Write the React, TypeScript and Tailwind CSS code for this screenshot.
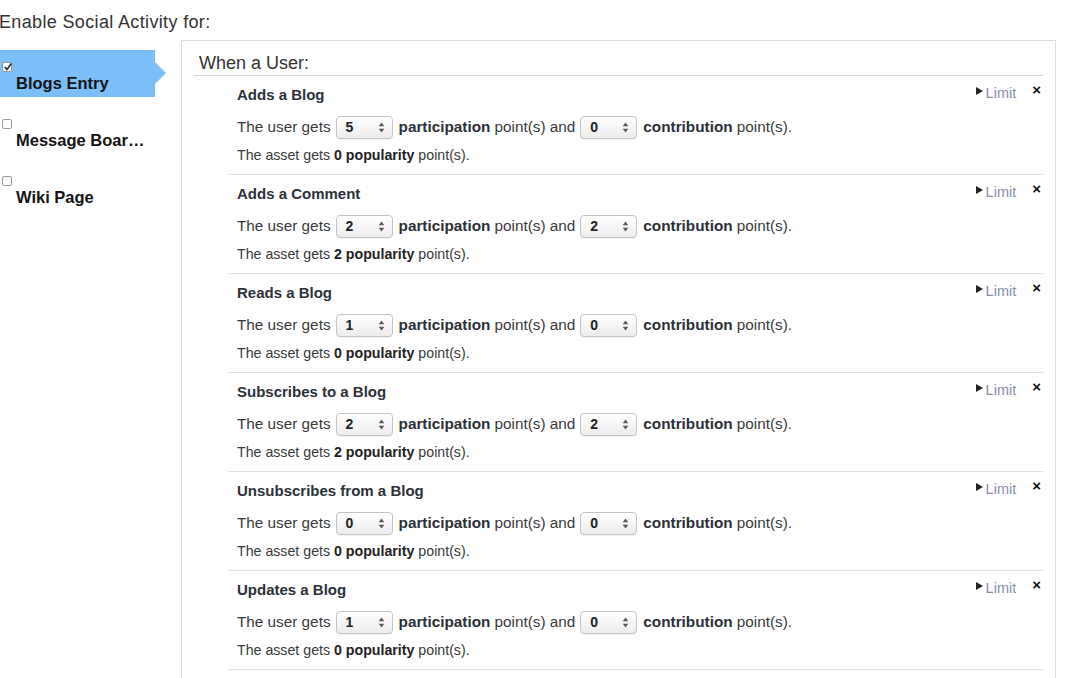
import React from "react";

interface Activity {
  title: string;
  participation: number;
  contribution: number;
  popularity: number;
}

const activities: Activity[] = [
  { title: "Adds a Blog", participation: 5, contribution: 0, popularity: 0 },
  { title: "Adds a Comment", participation: 2, contribution: 2, popularity: 2 },
  { title: "Reads a Blog", participation: 1, contribution: 0, popularity: 0 },
  { title: "Subscribes to a Blog", participation: 2, contribution: 2, popularity: 2 },
  { title: "Unsubscribes from a Blog", participation: 0, contribution: 0, popularity: 0 },
  { title: "Updates a Blog", participation: 1, contribution: 0, popularity: 0 },
];

const assets = [
  { label: "Blogs Entry", checked: true },
  { label: "Message Boards Message", checked: false },
  { label: "Wiki Page", checked: false },
];

function Check({ checked }: { checked: boolean }) {
  return (
    <span className="block w-[10px] h-[10px] rounded-[2px] border border-[#9a9a9a] bg-white relative">
      {checked && (
        <svg viewBox="0 0 10 10" className="absolute left-0 top-[-1px] w-[10px] h-[10px]">
          <path d="M1.8 5 L4 7.4 L8.4 1.4" fill="none" stroke="#1f2f4f" strokeWidth="1.7" />
        </svg>
      )}
    </span>
  );
}

function Spinner() {
  return (
    <svg viewBox="0 0 7 11" className="w-[7px] h-[11px]">
      <path d="M3.5 0.5 L6.3 4.3 L0.7 4.3 Z" fill="#5a5a5a" />
      <path d="M3.5 10.5 L6.3 6.7 L0.7 6.7 Z" fill="#5a5a5a" />
    </svg>
  );
}

function PointSelect({ value }: { value: number }) {
  return (
    <span className="inline-flex items-center justify-between w-[57px] h-[23px] ml-[5px] mr-[6px] pl-[9px] pr-[7px] rounded-[4px] border border-[#c4c4c4] bg-gradient-to-b from-white to-[#ececec] shadow-[0_1px_0_rgba(0,0,0,0.05)]">
      <span className="font-bold text-[14px] text-[#222]">{value}</span>
      <Spinner />
    </span>
  );
}

function ActivityRow({ a }: { a: Activity }) {
  return (
    <div className="ml-[34px] border-b border-[#e2e2e2] flex">
      <div className="flex-1 pl-[9px] pt-[9px] pb-[10px]">
        <div className="text-[15px] leading-[20px] font-bold text-[#2c3038]">{a.title}</div>
        <div className="mt-[9px] h-[26px] flex items-center text-[15.3px] text-[#3a3a3a]">
          <span>The user gets</span>
          <PointSelect value={a.participation} />
          <span className="font-bold text-[#2c3038]">participation</span>
          <span>&nbsp;point(s) and</span>
          <PointSelect value={a.contribution} />
          <span className="font-bold text-[#2c3038]">contribution</span>
          <span>&nbsp;point(s).</span>
        </div>
        <div className="mt-[6px] text-[14.2px] leading-[18px] text-[#3a3a3a]">
          The asset gets <span className="font-bold text-[#222]">{a.popularity} popularity</span> point(s).
        </div>
      </div>
      <div className="flex items-start pt-[8px] pr-[2px]">
        <span className="flex items-center">
          <svg viewBox="0 0 7 8" className="w-[7px] h-[8px] mr-[3px] mt-[-4px]">
            <path d="M0 0 L7 4 L0 8 Z" fill="#222" />
          </svg>
          <span className="text-[14.5px] leading-[18px] text-[#878fab]">Limit</span>
        </span>
        <span className="ml-[16px] mt-[-3px] text-[15px] leading-[18px] font-bold text-[#111]">×</span>
      </div>
    </div>
  );
}

export default function App() {
  return (
    <div className="w-[1068px] h-[678px] overflow-hidden bg-white font-['Liberation_Sans',Arial,sans-serif]">
      <div className="h-[40px] pt-[12px] text-[18px] leading-[20px] tracking-[0.35px] text-[#333] ml-[-1px]">
        Enable Social Activity for:
      </div>
      <div className="flex">
        <div className="w-[181px] shrink-0 pt-[10px] flex flex-col gap-[10px]">
          {assets.map((s) =>
            s.checked ? (
              <div key={s.label} className="relative w-[155px] h-[47px] bg-[#7bbef8] pl-[2px] pt-[12px]">
                <Check checked />
                <div className="mt-[1px] pl-[14px] text-[16.5px] leading-[20px] font-bold text-[#141414] truncate">{s.label}</div>
                <span className="absolute right-[-11px] top-[12px] w-0 h-0 border-y-[11.5px] border-y-transparent border-l-[11px] border-l-[#7bbef8]" />
              </div>
            ) : (
              <div key={s.label} className="w-[155px] h-[47px] pl-[2px] pt-[12px]">
                <Check checked={false} />
                <div className="mt-[1px] pl-[14px] pr-[8px] text-[16.5px] leading-[20px] font-bold text-[#141414] truncate">{s.label}</div>
              </div>
            )
          )}
        </div>
        <div className="flex-1 mr-[12px] border border-[#dedede] px-[12px] pb-[40px]">
          <div className="pt-[12px] pb-[2px] pl-[5px] border-b border-[#d8d8d8] text-[18px] leading-[20px] text-[#333]">
            When a User:
          </div>
          {activities.map((a) => (
            <ActivityRow key={a.title} a={a} />
          ))}
        </div>
      </div>
    </div>
  );
}
